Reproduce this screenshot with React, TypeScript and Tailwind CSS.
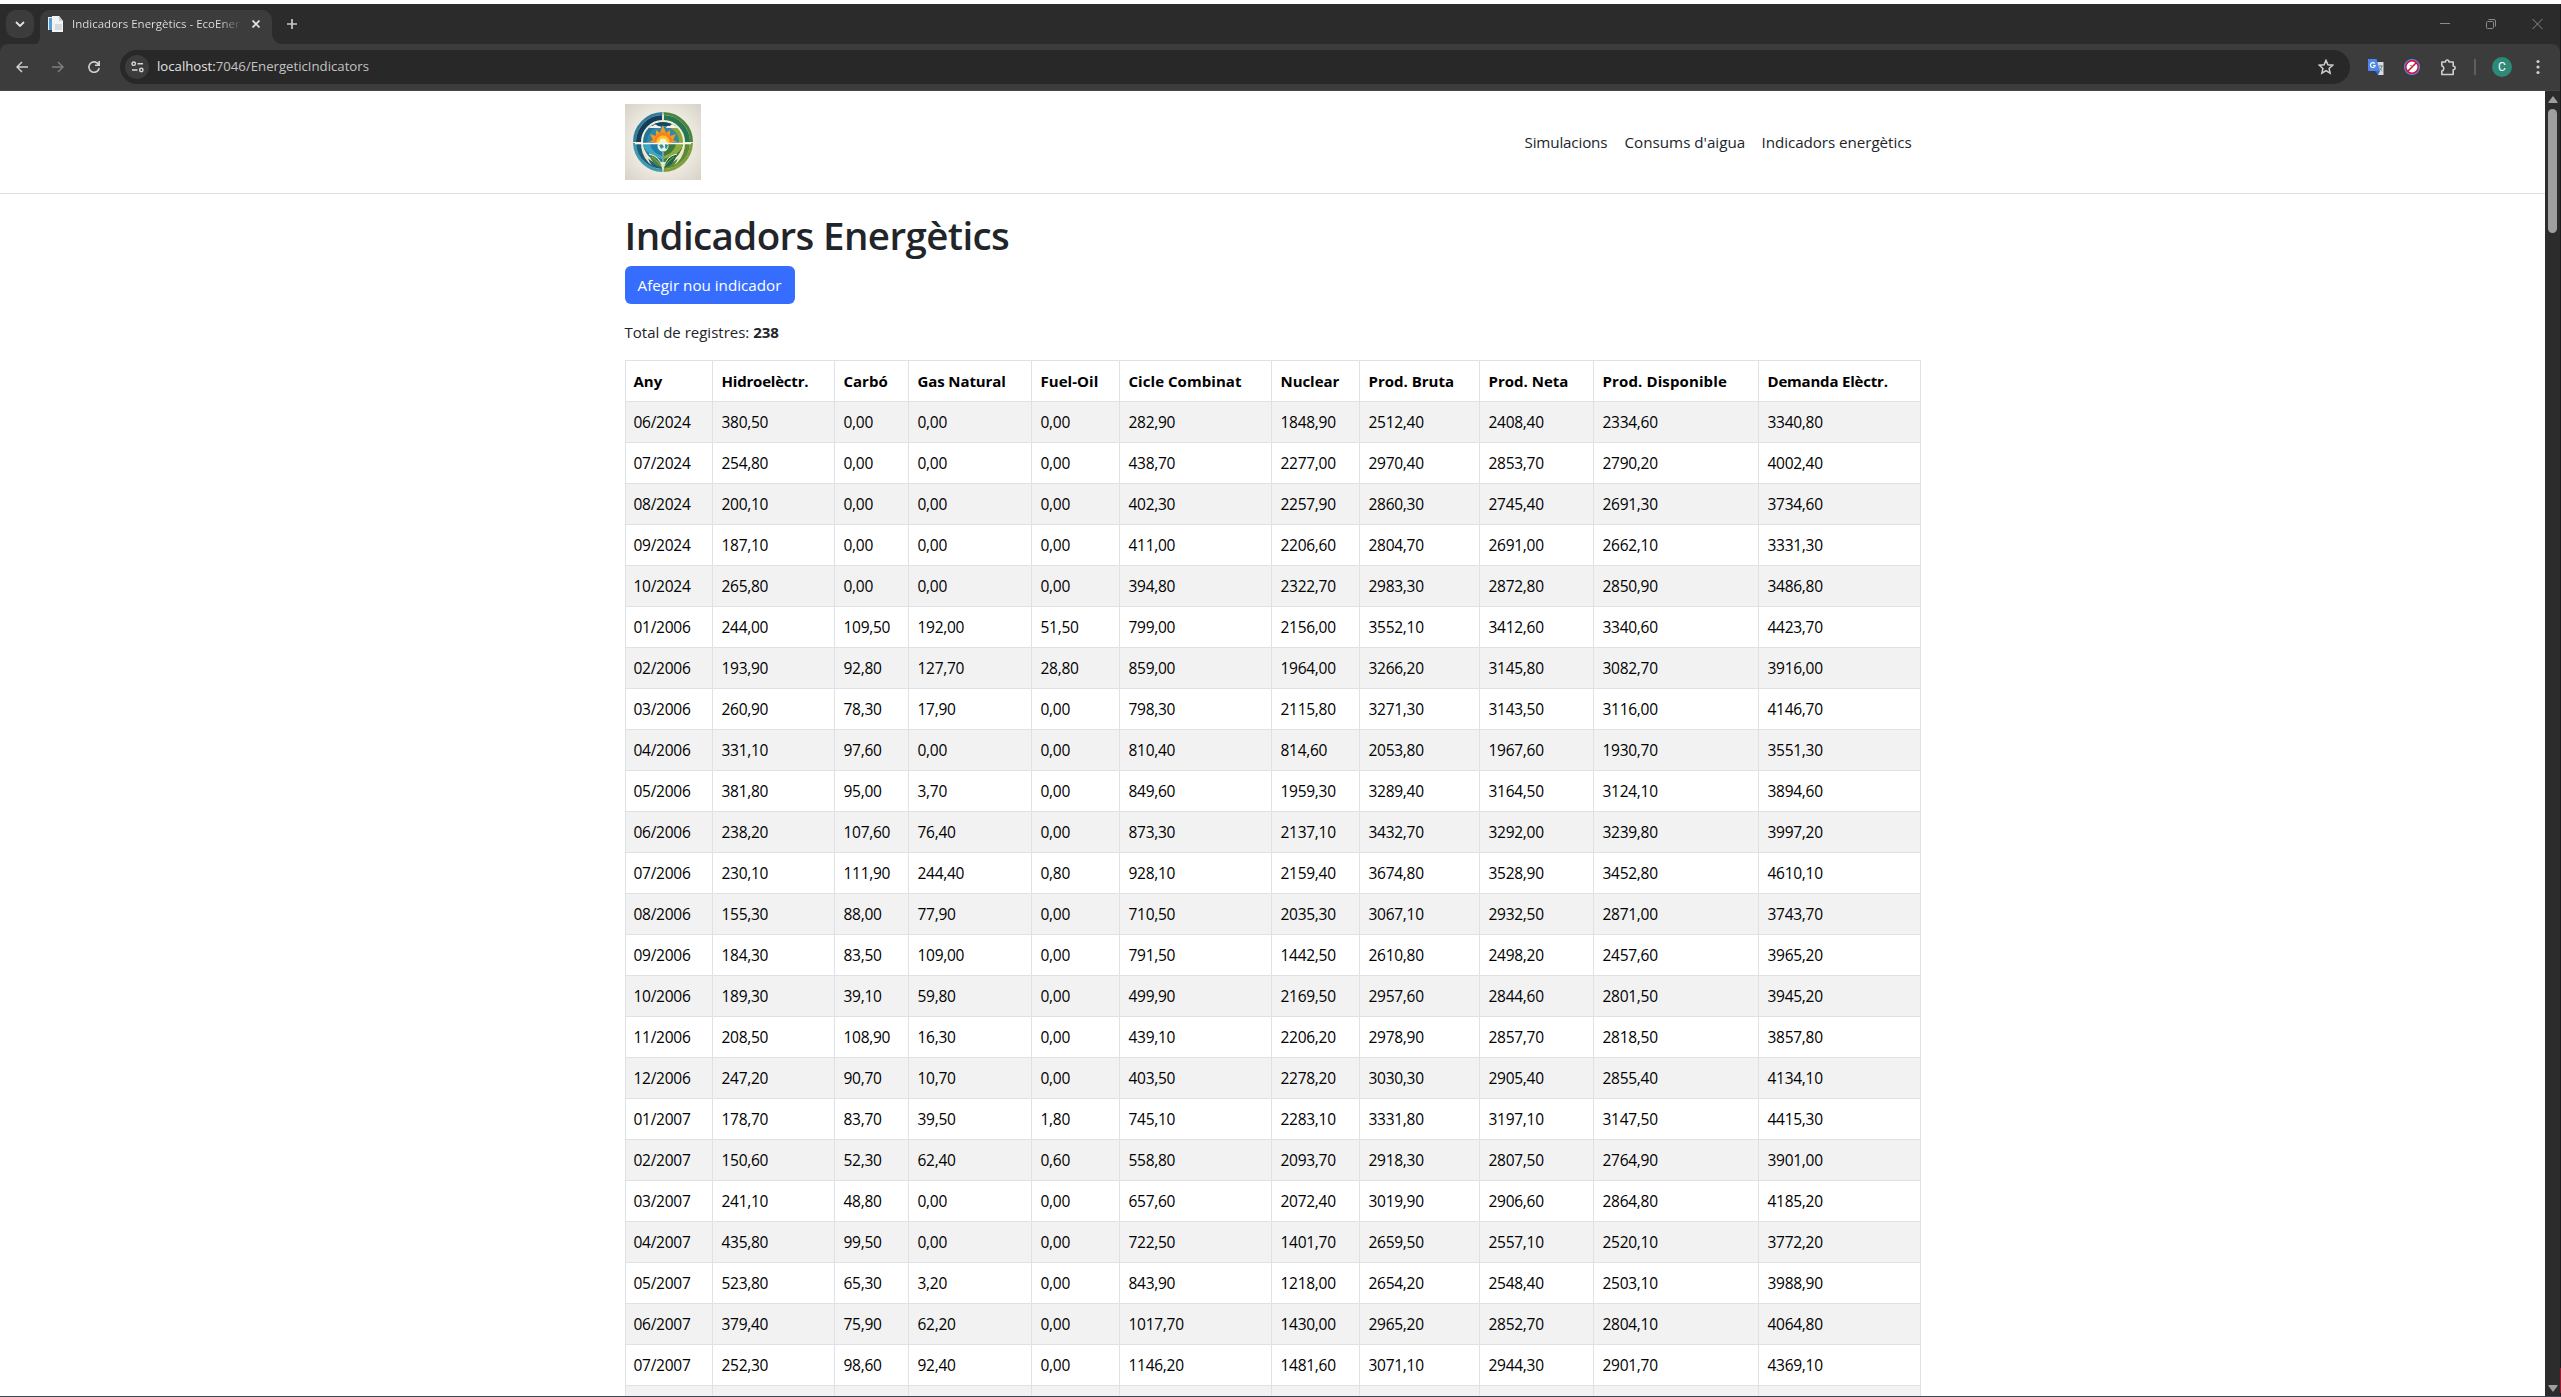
import React from "react";

const columns = ["Any", "Hidroelèctr.", "Carbó", "Gas Natural", "Fuel-Oil", "Cicle Combinat", "Nuclear", "Prod. Bruta", "Prod. Neta", "Prod. Disponible", "Demanda Elèctr."];
const widths = [87, 122, 74, 123, 88, 152, 88, 120, 114, 165, 162];
const headSpacing = [0, -0.2, 0, -0.1, 0.05, 0.05, -0.05, 0, 0, 0.12, -0.2];

const rows = `06/2024 380,50 0,00 0,00 0,00 282,90 1848,90 2512,40 2408,40 2334,60 3340,80
07/2024 254,80 0,00 0,00 0,00 438,70 2277,00 2970,40 2853,70 2790,20 4002,40
08/2024 200,10 0,00 0,00 0,00 402,30 2257,90 2860,30 2745,40 2691,30 3734,60
09/2024 187,10 0,00 0,00 0,00 411,00 2206,60 2804,70 2691,00 2662,10 3331,30
10/2024 265,80 0,00 0,00 0,00 394,80 2322,70 2983,30 2872,80 2850,90 3486,80
01/2006 244,00 109,50 192,00 51,50 799,00 2156,00 3552,10 3412,60 3340,60 4423,70
02/2006 193,90 92,80 127,70 28,80 859,00 1964,00 3266,20 3145,80 3082,70 3916,00
03/2006 260,90 78,30 17,90 0,00 798,30 2115,80 3271,30 3143,50 3116,00 4146,70
04/2006 331,10 97,60 0,00 0,00 810,40 814,60 2053,80 1967,60 1930,70 3551,30
05/2006 381,80 95,00 3,70 0,00 849,60 1959,30 3289,40 3164,50 3124,10 3894,60
06/2006 238,20 107,60 76,40 0,00 873,30 2137,10 3432,70 3292,00 3239,80 3997,20
07/2006 230,10 111,90 244,40 0,80 928,10 2159,40 3674,80 3528,90 3452,80 4610,10
08/2006 155,30 88,00 77,90 0,00 710,50 2035,30 3067,10 2932,50 2871,00 3743,70
09/2006 184,30 83,50 109,00 0,00 791,50 1442,50 2610,80 2498,20 2457,60 3965,20
10/2006 189,30 39,10 59,80 0,00 499,90 2169,50 2957,60 2844,60 2801,50 3945,20
11/2006 208,50 108,90 16,30 0,00 439,10 2206,20 2978,90 2857,70 2818,50 3857,80
12/2006 247,20 90,70 10,70 0,00 403,50 2278,20 3030,30 2905,40 2855,40 4134,10
01/2007 178,70 83,70 39,50 1,80 745,10 2283,10 3331,80 3197,10 3147,50 4415,30
02/2007 150,60 52,30 62,40 0,60 558,80 2093,70 2918,30 2807,50 2764,90 3901,00
03/2007 241,10 48,80 0,00 0,00 657,60 2072,40 3019,90 2906,60 2864,80 4185,20
04/2007 435,80 99,50 0,00 0,00 722,50 1401,70 2659,50 2557,10 2520,10 3772,20
05/2007 523,80 65,30 3,20 0,00 843,90 1218,00 2654,20 2548,40 2503,10 3988,90
06/2007 379,40 75,90 62,20 0,00 1017,70 1430,00 2965,20 2852,70 2804,10 4064,80
07/2007 252,30 98,60 92,40 0,00 1146,20 1481,60 3071,10 2944,30 2901,70 4369,10`
  .split("\n")
  .map((line) => line.split(" "));

function TabStrip() {
  return (
    <div className="flex h-10 items-end bg-[#2b2b2b] pl-1.5">
      <div className="mb-1.5 flex h-7 w-7 items-center justify-center rounded-[10px] bg-[#3c3c3c]">
        <svg width="10" height="6" viewBox="0 0 10 6" fill="none" stroke="#e3e3e3" strokeWidth="1.8"><path d="M1 1l4 4 4-4" /></svg>
      </div>
      <svg className="-mr-px ml-0.5" width="5" height="10" viewBox="0 0 5 10"><path d="M5 0v10H0Q4 8 5 0Z" fill="#3c3c3c" /></svg>
      <div className="flex h-[34px] w-[232px] items-center rounded-t-[10px] bg-[#3c3c3c] pb-1.5 pl-2">
        <svg width="16" height="16" viewBox="0 0 16 16">
          <path d="M0 1h11v13H0z" fill="#e9f0f6" />
          <path d="M1 2h3v12H1z" fill="#5b9bd5" />
          <path d="M4 0h7l4 5v11H4z" fill="#f2f3f5" />
          <path d="M11 0v5h4z" fill="#c9ced4" />
          <path d="M7 8h7v6H7z" fill="#d5dae2" />
        </svg>
        <span className="ml-2 w-[168px] whitespace-nowrap bg-linear-to-r from-[#e3e3e3] from-88% to-[#4a4a4a] bg-clip-text text-[11.5px] leading-4 text-transparent">Indicadors Energètics - EcoEner</span>
        <svg className="ml-3" width="8" height="8" viewBox="0 0 8 8" stroke="#e3e3e3" strokeWidth="1.7"><path d="M.5.5l7 7M7.500.5l-7 7" /></svg>
      </div>
      <svg width="10" height="10" viewBox="0 0 10 10"><path d="M0 0v10h10Q1 9 0 0Z" fill="#3c3c3c" /></svg>
      <svg className="mb-[15px] ml-[5px]" width="10" height="10" viewBox="0 0 10 10" stroke="#c7c7c7" strokeWidth="1.7"><path d="M5 0v10M0 5h10" /></svg>
      <div className="mb-3 ml-auto mr-[17px] flex h-4 items-center gap-9 text-[#8b8b8b]">
        <svg width="10" height="10" viewBox="0 0 10 10" stroke="currentColor"><path d="M0 4.500h10" /></svg>
        <svg width="10" height="10" viewBox="0 0 10 10" fill="none" stroke="currentColor"><rect x=".5" y="2.500" width="7" height="7" rx="1" /><path d="M2.500.5H8a1.500 1.500 0 0 1 1.500 1.500v5.500" /></svg>
        <svg width="11" height="10" viewBox="0 0 11 10" stroke="currentColor"><path d="M.5 0l10 10M10.500 0l-10 10" /></svg>
      </div>
    </div>
  );
}

function Toolbar() {
  return (
    <div className="bg-[#2b2b2b]">
      <div className="flex h-[47px] items-center rounded-t-lg border-b border-[#474747] bg-[#3c3c3c] pl-4 pr-[19px]">
        <svg width="12" height="12" viewBox="0 0 12 12" fill="none" stroke="#d0d0d0" strokeWidth="1.500"><path d="M12 6H1M6 1L1 6l5 5" /></svg>
        <svg className="ml-6" width="12" height="12" viewBox="0 0 12 12" fill="none" stroke="#7e7e7e" strokeWidth="1.500"><path d="M0 6h11M6 1l5 5-5 5" /></svg>
        <svg className="ml-6" width="12" height="12" viewBox="0 0 12 12" fill="none" stroke="#d0d0d0" strokeWidth="1.600"><path d="M10.600 3.500A5.200 5.200 0 1 0 11.200 7M11.200 0v4.300H7" /></svg>
        <div className="ml-5 flex h-[34px] w-[2230px] items-center rounded-full bg-[#282828] pl-[5px] pr-[16px]">
          <div className="flex h-6 w-6 items-center justify-center rounded-full bg-[#3c3c3c]">
            <svg width="13" height="12" viewBox="0 0 13 12" fill="none" stroke="#d8d8d8" strokeWidth="1.400"><circle cx="2.700" cy="2.700" r="1.700" /><path d="M6.500 2.700H12M1 9h5.500" /><circle cx="10.300" cy="9" r="1.700" /></svg>
          </div>
          <span className="ml-2 text-[13.200px] text-[#e3e3e3]">localhost:<span className="text-[#c3c3c3]">7046/EnergeticIndicators</span></span>
          <svg className="ml-auto" width="16" height="16" viewBox="0 0 24 24" fill="none" stroke="#d0d0d0" strokeWidth="2.200"><path d="M12 2l2.900 6.600 7.100.7-5.400 4.800 1.600 7.100L12 17.500l-6.200 3.700 1.600-7.100L2 9.300l7.100-.7z" /></svg>
        </div>
        <svg className="ml-[18px]" width="16" height="16" viewBox="0 0 16 16">
          <path d="M8 3h7.500v13H10z" fill="#dadce0" />
          <path d="M0 0h8.500l3.500 12H1a1 1 0 0 1-1-1z" fill="#4f86ec" />
          <path d="M7.200 12H12l-2 4z" fill="#3367d6" />
          <path d="M6.800 4.700A2.400 2.400 0 1 0 7.200 6.500H5" fill="none" stroke="#fff" strokeWidth="1.200" />
          <path d="M10.800 7h4M12.800 6v1M14 7q-.5 3-3 5M11.500 8.500q1 2.500 3 3.500" fill="none" stroke="#6b7a86" strokeWidth=".8" />
        </svg>
        <svg className="ml-5" width="16" height="16" viewBox="0 0 16 16" fill="none"><circle cx="8" cy="8" r="8" fill="#5b8def" /><circle cx="8" cy="8" r="6.200" fill="#fff" stroke="#d0103a" strokeWidth="1.500" /><path d="M4 12l8-8" stroke="#d0103a" strokeWidth="1.600" /><path d="M5.800 6.500h2" stroke="#777" strokeWidth=".8" /></svg>
        <svg className="ml-5" width="17" height="17" viewBox="0 0 17 17" fill="none" stroke="#cfcfcf" strokeWidth="1.600"><path d="M1.800 3h3.700q.2-2 1.800-2T9 3h4.200v4q2 .3 2 1.900t-2 1.900v4.700H1.800V12q2-.5 2-2.600t-2-2.700z" strokeLinejoin="round" /></svg>
        <div className="ml-[17px] h-4 w-0.5 bg-[#5e5e5e]" />
        <div className="ml-4 flex h-5 w-5 items-center justify-center rounded-full bg-[#2d8a78] font-['Roboto'] text-[12px] leading-5 text-white">C</div>
        <svg className="ml-6" width="4" height="16" viewBox="0 0 4 16" fill="#cfcfcf"><circle cx="2" cy="2.500" r="1.600" /><circle cx="2" cy="8" r="1.600" /><circle cx="2" cy="13.500" r="1.600" /></svg>
      </div>
    </div>
  );
}

function Logo() {
  return (
    <svg width="76" height="76" viewBox="0 0 76 76" fill="none">
      <defs>
        <radialGradient id="paper" r=".7"><stop offset="0" stopColor="#f6f2e6" /><stop offset=".55" stopColor="#eeeae0" /><stop offset="1" stopColor="#d8d2c9" /></radialGradient>
        <clipPath id="disc"><circle cx="38" cy="38" r="20" /></clipPath>
        <clipPath id="sky"><path d="M14 14h48v25H14z" /></clipPath>
      </defs>
      <path d="M0 0h76v76H0z" fill="url(#paper)" />
      <circle cx="38" cy="38" r="29" fill="#eef0dc" />
      <path d="M37.500 9.500A28.500 28.500 0 0 0 9.500 38" stroke="#2f7f9c" strokeWidth="3" />
      <path d="M9.500 39a28.500 28.500 0 0 0 28 27.500" stroke="#3d9bb0" strokeWidth="3" />
      <path d="M38.500 9.500A28.500 28.500 0 0 1 66.500 38" stroke="#4c843e" strokeWidth="3" />
      <path d="M66.500 39a28.500 28.500 0 0 1-28 27.500" stroke="#7f9f38" strokeWidth="3" />
      <path d="M37 13.500a24.500 24.500 0 0 0-23.500 24.500" stroke="#143d5a" strokeWidth="5" />
      <path d="M13.500 40A24.500 24.500 0 0 0 37 62.500" stroke="#1d5d7c" strokeWidth="5" />
      <path d="M39 13.500a24.500 24.500 0 0 1 23.500 24.500" stroke="#287552" strokeWidth="5" />
      <path d="M62.500 40A24.500 24.500 0 0 1 39 62.500" stroke="#5d873a" strokeWidth="5" />
      <g clipPath="url(#disc)">
        <path d="M16 14h22v25H16z" fill="#23769b" /><path d="M38 14h22v25H38z" fill="#8fa63a" />
        <path d="M16 39h22v23H16z" fill="#2c91b5" /><path d="M38 39h22v23H38z" fill="#5a933e" />
        <circle cx="38" cy="38" r="16" fill="#3787a6" clipPath="url(#sky)" />
        <path d="M27 17q11-5 22 0l-4 5H31z" fill="#164866" />
        <path d="M24 24q1-3 4-2 2-3 5 0 3 0 3 2zM41 24q1-3 4-2 2-3 5 0 3 0 3 2z" fill="#f5f3e9" />
        <path d="M24 38l4-2-3-6 6 2 0-6 4 3 3-8 3 8 4-3v6l6-2-3 6 4 2z" fill="#f39a1f" />
        <circle cx="38" cy="38" r="9.500" fill="#f58220" clipPath="url(#sky)" /><circle cx="38" cy="38" r="6.500" fill="#ffc52e" clipPath="url(#sky)" /><circle cx="38" cy="38" r="3.500" fill="#fff4b0" />
        <path d="M38 40v18H26q-7-8-8-18z" fill="#237ea6" /><path d="M38 40v18h12q7-8 8-18z" fill="#3c7a40" />
        <path d="M17 40h8q2 9 12 12v3q-15-3-20-15z" fill="#3fa5c6" /><path d="M59 40h-8q-2 9-12 12v3q15-3 20-15z" fill="#8daa3d" />
      </g>
      <path d="M16 42q4 3 7 11 1 6 5 9-10-6-12-20zM60 42q-4 3-7 11-1 6-5 9 10-6 12-20z" fill="#f0e5c6" />
      <path d="M24 50q11 2 13.500 14Q27 62 24 50z" fill="#4d8440" /><path d="M52 50q-11 2-13.500 14Q49 62 52 50z" fill="#1e6447" />
      <path d="M24 50q11 2 13.500 14M52 50q-11 2-13.500 14" stroke="#e9efd0" strokeWidth="1" />
      <path d="M27 53q6 4 10 10M49 53q-6 4-10 10" stroke="#a5bd5d" strokeWidth=".7" />
      <circle cx="38" cy="42" r="5.500" fill="#e9f3ec" /><path d="M34 41l3-1 2 3-3 2zM40 39l3 2-1 4-2-1z" fill="#3a9292" />
      <path d="M10 39.500h56" stroke="#fdf8e6" strokeWidth="1.300" /><path d="M38 9v8M38 48v19" stroke="#d7e0c0" strokeWidth=".8" />
    </svg>
  );
}

function Page() {
  return (
    <div className="min-w-0 flex-1 bg-white text-[15px] leading-6 text-[#212529]">
      <nav className="flex h-[103px] justify-center border-b border-[#dee2e6]">
        <div className="mt-[13px] flex h-[76px] w-[1296px] items-center">
          <Logo />
          <div className="ml-auto mr-2 flex gap-4 whitespace-nowrap text-[15.200px]">
            <a className="w-[84px] tracking-[-0.160px]">Simulacions</a>
            <a className="w-[121px]">Consums d'aigua</a>
            <a className="w-[151px] tracking-[-0.060px]">Indicadors energètics</a>
          </div>
        </div>
      </nav>
      <main className="mx-auto w-[1296px] pt-4">
        <h1 className="h-14 whitespace-nowrap text-[38.500px] font-semibold leading-[50px] tracking-[-0.600px]">Indicadors Energètics</h1>
        <button className="flex h-[38px] w-[170px] items-center justify-center rounded-md bg-[#366dff] text-[15.200px] text-white">Afegir nou indicador</button>
        <p className="mb-4 mt-4 leading-6">Total de registres: <b>238</b></p>
        <table className="w-[1296px] table-fixed border-collapse text-black">
          <colgroup>{widths.map((w, i) => <col key={i} style={{ width: w }} />)}</colgroup>
          <thead>
            <tr className="h-[41px]">
              {columns.map((c, i) => <th key={c} style={{ letterSpacing: headSpacing[i] }} className="whitespace-nowrap border border-[#dee2e6] py-0 pl-[9px] text-left font-bold first:pl-2">{c}</th>)}
            </tr>
          </thead>
          <tbody className="text-[15.500px] tracking-[-0.270px]">
            {rows.map((r) => (
              <tr key={r[0]} className="h-[41px] odd:bg-[#f2f2f2]">
                {r.map((v, i) => <td key={i} className="whitespace-nowrap border border-[#dee2e6] py-0 pl-[9px] first:pl-2">{v}</td>)}
              </tr>
            ))}
            <tr className="h-[41px] bg-[#f2f2f2]">{columns.map((c) => <td key={c} className="border border-[#dee2e6]" />)}</tr>
          </tbody>
        </table>
      </main>
    </div>
  );
}

function Scrollbar() {
  return (
    <div className="flex w-[15px] flex-col items-center bg-[#2c2c2c] pb-1 pt-[5px]">
      <svg width="10" height="7" viewBox="0 0 10 7"><path d="M5 0l4.500 6v1H.5V6z" fill="#9f9f9f" /></svg>
      <div className="mt-1.5 h-[124px] w-[9px] rounded-full bg-[#9f9f9f]" />
      <svg className="mt-auto" width="10" height="7" viewBox="0 0 10 7"><path d="M5 7L.5 1V0h9v1z" fill="#9f9f9f" /></svg>
    </div>
  );
}

export default function App() {
  return (
    <div className="flex h-[1397px] w-[2561px] flex-col overflow-hidden bg-white pt-1 font-['Open_Sans','Noto_Sans',sans-serif]">
      <div className="flex min-h-0 flex-1">
        <div className="flex w-[2560px] flex-col">
          <TabStrip />
          <Toolbar />
          <div className="flex min-h-0 flex-1 overflow-hidden"><Page /><Scrollbar /></div>
        </div>
        <div className="flex w-px flex-col justify-end bg-[#1c1c1c] pb-[3px]"><div className="h-[25px] bg-[#a3122c]" /></div>
      </div>
      <div className="h-px bg-[#3b4a50]" />
    </div>
  );
}
